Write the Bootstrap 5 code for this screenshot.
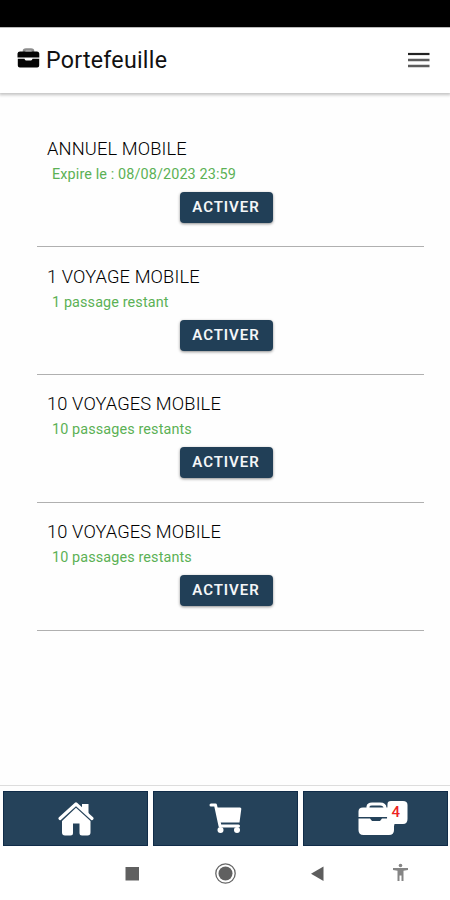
<!DOCTYPE html>
<html lang="fr">
<head>
<meta charset="utf-8">
<meta name="viewport" content="width=device-width, initial-scale=1">
<title>Portefeuille</title>
<link href="https://cdn.jsdelivr.net/npm/bootstrap@5.3.0/dist/css/bootstrap.min.css" rel="stylesheet">
<style>
body{font-family:Roboto,"Liberation Sans",sans-serif;height:900px;color:#222;background:#fefefe}
svg{display:block}
.status-strip{height:27px;background:#000}
.app-header{height:66px;padding:0 20px 2px 17px;border-top:1px solid #bbb;box-shadow:0 1px 3px 1px rgba(0,0,0,.24)}
.app-title{font-size:23.2px;line-height:28px;color:#111;margin-left:6px;letter-spacing:.26px}
.pass-list{padding:26.6px 26px 0 37px}
.pass-item{height:127.75px;padding:17.300px 10px 0;border-bottom:1.5px solid #b0b0b0}
.pass-name{font-size:18.3px;line-height:24px;font-weight:300;color:#000;letter-spacing:.12px}
.pass-info{font-size:14.4px;line-height:18px;color:#5bb155;margin-top:5px;padding-left:5px;letter-spacing:.12px}
.activate{width:93px;height:31px;margin-top:8px;margin-right:9px;border-radius:4px;background:#213f57;color:#f4f6f8;font-size:15px;font-weight:600;letter-spacing:.95px;line-height:31px;box-shadow:0 1px 3px rgba(0,0,0,.45)}
.activate:hover{background:#2b4c66;color:#fff}
.tab-strip{height:62px;padding:5px 2px 0 3px;gap:5px;border-top:1px solid #ddd}
.tab-cell{flex:1 1 0;height:55px;background:#25425a;border:1px solid #102c49}
.tab-cell:hover{background:#2b4c66}
.tab-wallet{margin-left:14px}
.sys-nav{height:53px}
.sys-nav svg{width:450px;height:53px}
</style>
<script src="https://cdn.jsdelivr.net/npm/bootstrap@5.3.0/dist/js/bootstrap.bundle.min.js"></script>
</head>
<body class="d-flex flex-column overflow-hidden">
<div class="status-strip flex-shrink-0"></div>
<header class="app-header bg-white d-flex align-items-center flex-shrink-0">
  <svg width="23" height="23" viewBox="0 0 23 23"><path d="M7 4.500V3Q7 1.500 9 1.500h5q2 0 2 1.500v1.500" fill="none" stroke="#8d8d8d" stroke-width="2.600"/><path d="M3 3.500h17q2 0 2.300 2V9.500H.5v-4Q.8 3.500 3 3.500zM.8 10.800h6.700q.3 1.700 1.500 1.700h5q1.200 0 1.500-1.700h6.700V17.500q0 2-2 2H2.800q-2 0-2-2z" fill="#050505"/></svg>
  <h1 class="app-title mb-0 fw-normal">Portefeuille</h1>
  <button class="btn p-0 border-0 ms-auto" aria-label="Menu"><svg width="22" height="16" viewBox="0 0 22 16"><path d="M0 2h21.500" stroke="#222" stroke-width="2.200"/><path d="M0 8h21.500M0 14h21.500" stroke="#5c5c5c" stroke-width="2.600"/></svg></button>
</header>
<main class="pass-list flex-grow-1">
  <section class="pass-item d-flex flex-column"><h2 class="pass-name mb-0">ANNUEL MOBILE</h2><div class="pass-info">Expire le : 08/08/2023 23:59</div><button class="activate btn p-0 border-0 align-self-center">ACTIVER</button></section>
  <section class="pass-item d-flex flex-column"><h2 class="pass-name mb-0">1 VOYAGE MOBILE</h2><div class="pass-info">1 passage restant</div><button class="activate btn p-0 border-0 align-self-center">ACTIVER</button></section>
  <section class="pass-item d-flex flex-column"><h2 class="pass-name mb-0">10 VOYAGES MOBILE</h2><div class="pass-info">10 passages restants</div><button class="activate btn p-0 border-0 align-self-center">ACTIVER</button></section>
  <section class="pass-item d-flex flex-column"><h2 class="pass-name mb-0">10 VOYAGES MOBILE</h2><div class="pass-info">10 passages restants</div><button class="activate btn p-0 border-0 align-self-center">ACTIVER</button></section>
</main>
<nav class="tab-strip d-flex flex-shrink-0">
  <a href="#" class="tab-cell d-flex align-items-center justify-content-center" aria-label="Accueil"><svg width="38" height="36" viewBox="0 0 38 36"><path d="M3 17.500 19 3l16 14.500" fill="none" stroke="#fff" stroke-width="3.200" stroke-linecap="round" stroke-linejoin="round"/><path d="M25 3h6.500v10.500l-6.500-5z" fill="#fff"/><path d="M19 6.800 33.500 20V31.500q0 3-3 3H25q-2.500 0-2.500-2.500V22.500h-6.500V32q0 2.500-2.500 2.500H8q-3 0-3-3V20z" fill="#fff"/></svg></a>
  <a href="#" class="tab-cell d-flex align-items-center justify-content-center" aria-label="Panier"><svg width="33" height="34" viewBox="0 0 33 34"><path d="M2 3h4.500L11 24h18.500" fill="none" stroke="#fff" stroke-width="3" stroke-linecap="round" stroke-linejoin="round"/><path d="M7 5.500h24q1.500 0 1.300 1.500L30.500 20.500H10.500z" fill="#fff"/><circle cx="11.500" cy="28" r="3" fill="#fff"/><circle cx="28" cy="28" r="3" fill="#fff"/></svg></a>
  <a href="#" class="tab-cell d-flex align-items-center justify-content-center text-decoration-none" aria-label="Portefeuille"><svg class="tab-wallet" width="50" height="36" viewBox="0 0 50 36"><path d="M10 8V5.500Q10.500 3 14 3h8q5 0 5 4" fill="none" stroke="#fff" stroke-width="3"/><path d="M5 6.500h27v9.500H.5v-5.500q0-4 4.500-4zM.5 17.500h11.500l2 2.500h8l2-2.500H36v11.500q0 5-5 5H5.500q-5 0-5-5z" fill="#fff"/><path d="M29.500 3q0-3 3.500-3h12q4.500 0 4.500 4V18q0 5-4.500 5H36.500q0 2-1.500 3l-6-8z" fill="#fff"/><text x="33.500" y="16" font-family="Roboto,sans-serif" font-size="15" font-weight="500" fill="#ec2323">4</text></svg></a>
</nav>
<footer class="sys-nav bg-white flex-shrink-0">
  <svg viewBox="0 847 450 53"><path d="M125.500 867h13.500v13.500h-13.500z" fill="#606060"/><circle cx="225.500" cy="873.500" r="9.700" fill="none" stroke="#666" stroke-width="1.300"/><circle cx="225.500" cy="873.500" r="7" fill="#606060"/><path d="M323.500 866.500v14.500l-12.500-7.200z" fill="#5d5d5d"/><g fill="#858585"><circle cx="400.500" cy="865.500" r="1.800"/><path d="M393 868h15v2l-4.500.8V881h-2v-5.500h-2V881h-2v-10.200l-4.500-.8z"/></g></svg>
</footer>
</body>
</html>
